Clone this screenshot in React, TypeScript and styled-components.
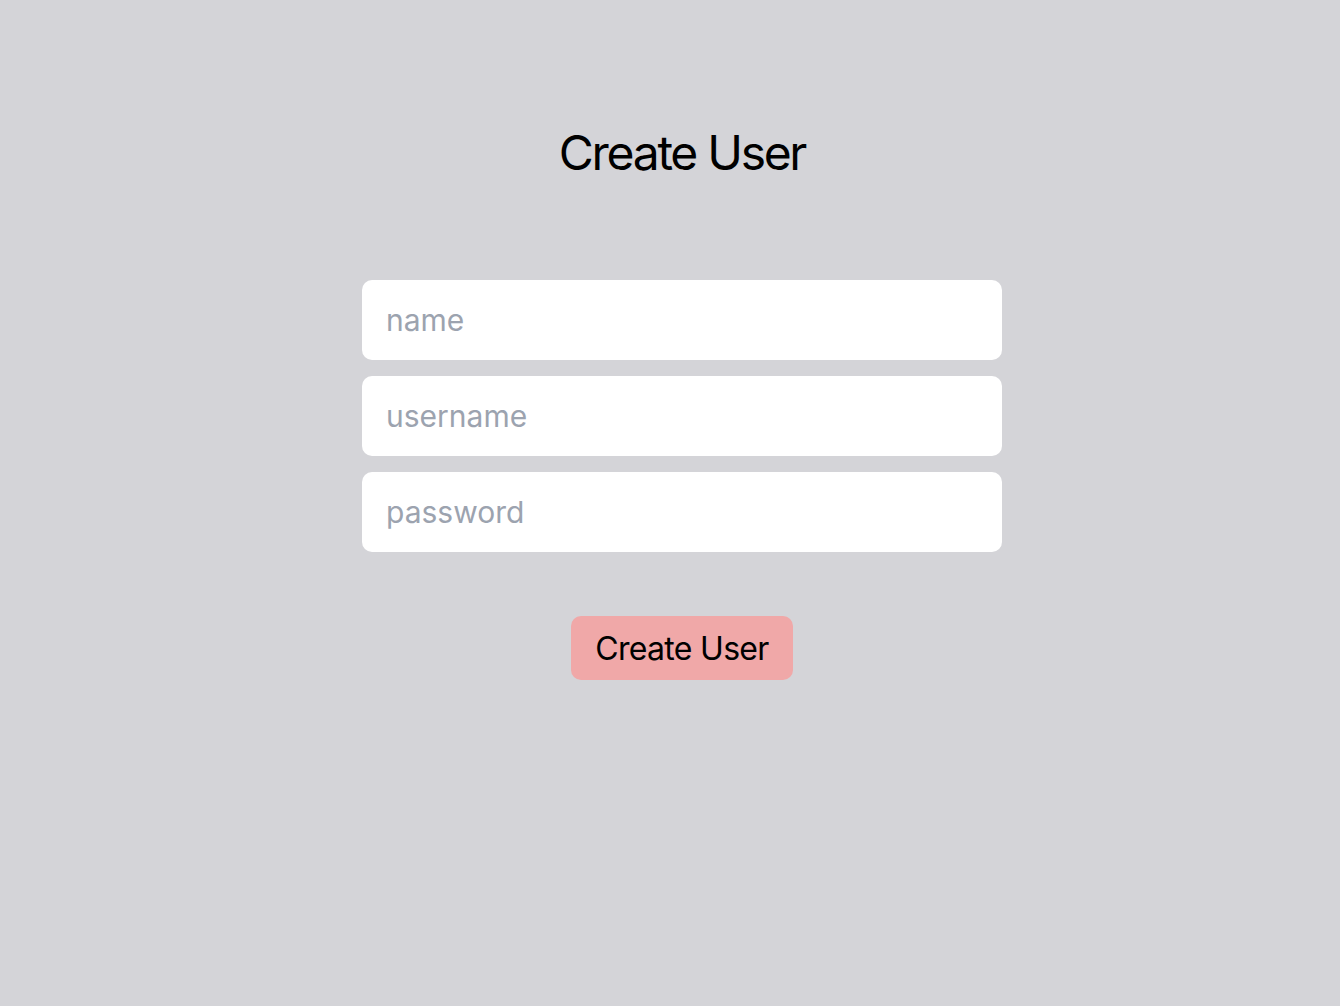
import React from 'react';
import styled, { createGlobalStyle } from 'styled-components';

const GlobalStyle = createGlobalStyle`
  html, body {
    margin: 0;
    padding: 0;
    background: #d4d4d8;
    font-family: Inter, "Liberation Sans", sans-serif;
  }
`;

const Page = styled.div`
  min-height: 1006px;
  display: flex;
  flex-direction: column;
  align-items: center;
  padding-top: 128px;
  padding-left: 24px;
  box-sizing: border-box;
`;

const Title = styled.h1`
  margin: 0;
  font-size: 48px;
  line-height: 50px;
  font-weight: 400;
  letter-spacing: -2.3px;
  color: #000;
`;

const Form = styled.form`
  margin-top: 102px;
  width: 640px;
  display: flex;
  flex-direction: column;
  align-items: center;
`;

const Fields = styled.div`
  width: 100%;
  display: flex;
  flex-direction: column;
  gap: 16px;
`;

const Input = styled.input`
  width: 100%;
  height: 80px;
  box-sizing: border-box;
  border: none;
  outline: none;
  border-radius: 10px;
  background: #fff;
  padding: 0 24px;
  font-family: inherit;
  font-size: 30px;
  color: #111;

  &::placeholder {
    color: #9ca3af;
  }
`;

const Button = styled.button`
  margin-top: 64px;
  height: 64px;
  padding: 0 24px;
  border: none;
  border-radius: 10px;
  background: #f0a8a8;
  font-family: inherit;
  font-size: 32px;
  letter-spacing: -0.7px;
  color: #000;
  cursor: pointer;
`;

export default function App() {
  return (
    <>
      <GlobalStyle />
      <Page>
        <Title>Create User</Title>
        <Form onSubmit={e => e.preventDefault()}>
          <Fields>
            <Input placeholder="name" />
            <Input placeholder="username" />
            <Input placeholder="password" type="password" />
          </Fields>
          <Button type="submit">Create User</Button>
        </Form>
      </Page>
    </>
  );
}
